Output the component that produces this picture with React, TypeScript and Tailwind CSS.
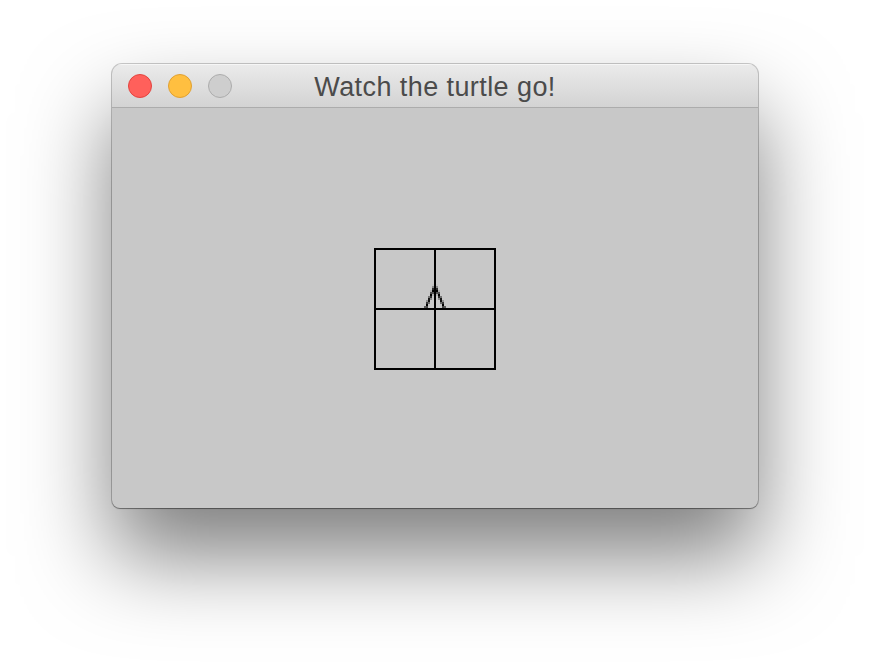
// One arm of the turtle arrow, rasterised on a coarse two-pixel grid.
const arm = Array.from({ length: 13 }, (_, row) => {
  const offset = Math.max(0, row - 0.5) * 0.42;
  const cell = Math.floor(offset);
  const part = offset - cell;
  const fade = row === 0 ? 0.3 : row === 12 ? 0.6 : 1;
  return [
    { row, cell, alpha: Math.min(1, (1 - part) * 1.1) * fade },
    { row, cell: cell + 1, alpha: Math.min(1, (part + 0.08) * 1.1) * fade },
  ];
}).flat();

function Turtle() {
  return (
    <g fill="black" stroke="none" shapeRendering="crispEdges">
      {[-1, 1].map((side) =>
        arm.map(({ row, cell, alpha }) => (
          <rect
            key={`${side}-${row}-${cell}`}
            x={60 + side * cell * 2}
            y={36 + row * 2}
            width="2"
            height="2"
            fillOpacity={alpha}
          />
        )),
      )}
    </g>
  );
}

export default function App() {
  return (
    <main className="flex h-[668px] w-[870px] items-start justify-center overflow-hidden bg-white pt-16">
      <section className="flex h-[444px] w-[646px] flex-col overflow-hidden rounded-[10px] rounded-b-[8px] bg-[#c8c8c8] shadow-[0_0_0_1px_rgba(0,0,0,0.2),0_1px_1px_rgba(0,0,0,0.3),0_48px_88px_rgba(0,0,0,0.51)]">
        <header className="grid h-11 shrink-0 grid-cols-[1fr_auto_1fr] items-center border-b border-[#acacac] bg-linear-to-b from-[#ebebeb] to-[#d3d3d3] pt-px shadow-[inset_0_1px_0_#f6f6f6]">
          <div className="flex gap-4 pl-4">
            <span className="size-6 rounded-full border border-[#e2443f] bg-[#ff605b]" />
            <span className="size-6 rounded-full border border-[#dfa032] bg-[#ffbf40]" />
            <span className="size-6 rounded-full border border-[#acacac] bg-[#cecece]" />
          </div>
          <h1 className="translate-y-px font-['Liberation_Sans',Arial,sans-serif] text-[27px] leading-8 tracking-[0.42px] whitespace-nowrap text-[#4b4b4b]">
            Watch the turtle go!
          </h1>
        </header>
        <div className="flex grow items-start justify-center pt-[140px]">
          <svg width="122" height="122" viewBox="0 0 122 122" fill="none" stroke="black" strokeWidth="2">
            <path d="M1 1H121V121H1ZM61 1V121M1 61H121" shapeRendering="crispEdges" />
            <Turtle />
          </svg>
        </div>
      </section>
    </main>
  );
}
